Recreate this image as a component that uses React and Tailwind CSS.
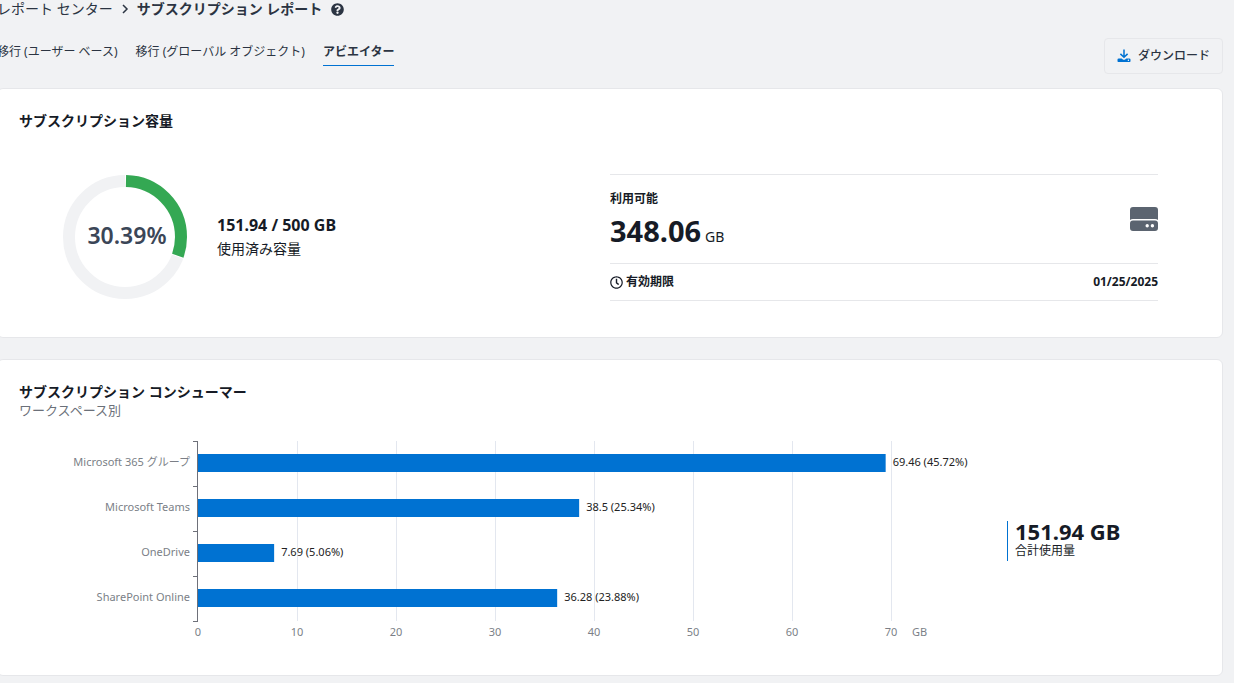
import { FaQuestionCircle, FaRegClock } from 'react-icons/fa';

const TABS = [
    { id: 'user', label: '移行 (ユーザー ベース)' },
    { id: 'global', label: '移行 (グローバル オブジェクト)' },
    { id: 'aviator', label: 'アビエイター' },
];

const CONSUMERS = [
    { name: 'Microsoft 365 グループ', value: 69.46, percent: 45.72 },
    { name: 'Microsoft Teams', value: 38.5, percent: 25.34 },
    { name: 'OneDrive', value: 7.69, percent: 5.06 },
    { name: 'SharePoint Online', value: 36.28, percent: 23.88 },
];

const TICKS = [0, 10, 20, 30, 40, 50, 60, 70];
const MAX = 70;
const ROW = 45;

const DownloadIcon = () => (
    <svg viewBox="0 0 14 14" className="w-[14px] h-[14px] text-[#0072d2]" fill="none" aria-hidden="true">
        <path d="M7 .5v7.5M3.4 4.9 7 8.3l3.6-3.4" stroke="currentColor" strokeWidth="1.5" />
        <path d="M1.8 9.4h2.9L6.2 10.7h1.6l1.5-1.3h2.9q1.3 0 1.3 1.2v1.3q0 1.2-1.3 1.2H1.8Q.5 13.1.5 11.9v-1.3q0-1.2 1.3-1.2z" fill="currentColor" />
        <circle cx="11.4" cy="11.3" r=".7" fill="#fff" />
    </svg>
);

const DriveIcon = () => (
    <svg viewBox="0 0 28 24" className="w-7 h-6 text-[#5b6470]" fill="currentColor" aria-hidden="true">
        <path d="M3 0h22q3 0 3 3v10q-1.2-.9-3-.9H3q-1.8 0-3 .9V3q0-3 3-3z" />
        <path fillRule="evenodd" d="M3 13.5h22q3 0 3 3V21q0 3-3 3H3q-3 0-3-3v-4.5q0-3 3-3zm14.2 3.6a1.7 1.7 0 1 0 0 3.4 1.7 1.7 0 0 0 0-3.4zm5.2 0a1.7 1.7 0 1 0 0 3.4 1.7 1.7 0 0 0 0-3.4z" />
    </svg>
);

const Donut = ({ percent }) => {
    const r = 56;
    const length = 2 * Math.PI * r;
    const used = (percent / 100) * length;
    return (
        <svg viewBox="0 0 124 124" className="w-[124px] h-[124px] shrink-0" role="img" aria-label={`${percent}%`}>
            <g transform="rotate(-90 62 62)" fill="none" strokeWidth="12">
                <circle cx="62" cy="62" r={r} stroke="#f1f2f4" />
                <circle cx="62" cy="62" r={r} stroke="#fff" strokeDasharray={`${used + 2} ${length}`} strokeDashoffset="1" />
                <circle cx="62" cy="62" r={r} stroke="#34a853" strokeDasharray={`${used - 1} ${length}`} strokeDashoffset="-1" />
            </g>
            <text x="64" y="69" textAnchor="middle" className="text-[23px] font-semibold fill-[#3b4657]">{percent}%</text>
        </svg>
    );
};

// Category names hang left of the plot, tick labels sit below it
const BarChart = () => {
    const height = CONSUMERS.length * ROW;
    const pos = (v) => `${(v / MAX) * 100}%`;
    return (
        <svg width="100%" height={height} className="block overflow-visible text-[11px]" role="img" aria-label="ワークスペース別">
            {TICKS.slice(1).map((t) => (
                <line key={t} x1={pos(t)} x2={pos(t)} y1="0" y2={height} stroke="#e3e7ef" shapeRendering="crispEdges" />
            ))}
            {CONSUMERS.map((c, i) => (
                <g key={c.name}>
                    <rect x="0" y={i * ROW + 13} width={pos(c.value)} height="18" fill="#0072d2" />
                    <text x="-8" y={i * ROW + 25} textAnchor="end" className="fill-[#7b7f87]">{c.name}</text>
                    <text x={pos(c.value)} dx="7" y={i * ROW + 25} className="fill-[#222]">{`${c.value} (${c.percent}%)`}</text>
                </g>
            ))}
            <g stroke="#6e7079" shapeRendering="crispEdges">
                <line x1="-1" x2="-1" y1="0" y2={height} />
                {[0, 1, 2, 3, 4].map((i) => (
                    <line key={i} x1="-5" x2="0" y1={i * ROW} y2={i * ROW} />
                ))}
            </g>
            {TICKS.map((t) => (
                <text key={t} x={pos(t)} y={height + 15} textAnchor="middle" className="fill-[#7b7f87]">{t}</text>
            ))}
            <text x="100%" dx="21" y={height + 15} className="fill-[#7b7f87]">GB</text>
        </svg>
    );
};

const Card = ({ title, subtitle, children }) => (
    <section className="bg-white border border-[#e6e7ea] rounded-md">
        <div className="px-[21px] pt-[22px]">
            <h2 className="text-sm leading-5 font-bold">{title}</h2>
            {subtitle && <p className="text-[13px] leading-4 text-[#6b7079]">{subtitle}</p>}
        </div>
        {children}
    </section>
);

const App = () => {
    return (
        <div className="min-h-screen overflow-hidden bg-[#f1f2f4] text-[#161b26] font-['Noto_Sans','Noto_Sans_CJK_JP',sans-serif]">
            <div className="-ml-[3px] mr-[11px]">
                <nav className="flex items-center h-[18px] text-sm leading-[18px] text-[#2b3442]">
                    <a href="#reports" className="shrink-0">レポート センター</a>
                    <svg viewBox="0 0 8 10" className="w-2 h-[10px] mx-2" fill="none" aria-hidden="true">
                        <path d="M2 1l4 4-4 4" stroke="currentColor" strokeWidth="1.5" />
                    </svg>
                    <h1 className="font-bold">サブスクリプション レポート</h1>
                    <FaQuestionCircle className="w-[13px] h-[13px] ml-[9px]" />
                </nav>

                <div className="flex items-start justify-between pt-5 pb-[14px]">
                    <div className="flex gap-[18px] pt-1 text-[12px] leading-5 text-[#2b3442]" role="tablist">
                        {TABS.map((tab) => (
                            <button
                                key={tab.id}
                                role="tab"
                                aria-selected={tab.id === 'aviator'}
                                className={`pb-[3px] border-b ${tab.id === 'aviator' ? 'font-bold border-[#0072d2]' : 'border-transparent'}`}
                            >
                                {tab.label}
                            </button>
                        ))}
                    </div>
                    <button className="flex items-center gap-[7px] h-9 px-3 text-[12px] font-medium text-[#2b3442] border border-[#e6e7ea] rounded">
                        <DownloadIcon />
                        ダウンロード
                    </button>
                </div>

                <main className="flex flex-col gap-[21px]">
                    <Card title="サブスクリプション容量">
                        <div className="grid grid-cols-2 items-center pt-[43px] pb-9">
                            <div className="flex items-center gap-[30px] pl-[65px] pb-[2px]">
                                <Donut percent={30.39} />
                                <div>
                                    <p className="text-base leading-6 font-bold">151.94 / 500 GB</p>
                                    <p className="text-sm leading-6">使用済み容量</p>
                                </div>
                            </div>
                            <div className="mr-16 border-y border-[#e6e7ea]">
                                <div className="flex items-center justify-between h-[88px]">
                                    <div>
                                        <p className="text-xs leading-6 font-bold">利用可能</p>
                                        <p className="flex items-baseline gap-1 leading-10">
                                            <span className="text-[29px] font-bold">348.06</span>
                                            <span className="text-sm">GB</span>
                                        </p>
                                    </div>
                                    <DriveIcon />
                                </div>
                                <div className="flex items-center justify-between h-[37px] border-t border-[#e6e7ea] text-xs font-bold">
                                    <span className="flex items-center gap-[3px]">
                                        <FaRegClock className="w-[13px] h-[13px]" />
                                        有効期限
                                    </span>
                                    <span>01/25/2025</span>
                                </div>
                            </div>
                        </div>
                    </Card>

                    <Card title="サブスクリプション コンシューマー" subtitle="ワークスペース別">
                        <div className="flex items-center pt-[23px] pb-[54px]">
                            <div className="flex-1 pl-[200px] pr-[116px]">
                                <BarChart />
                            </div>
                            <div className="w-[215px] mt-5">
                                <div className="pl-[7px] border-l border-[#0072d2]">
                                    <p className="text-[22px] leading-5 font-bold">151.94 GB</p>
                                    <p className="text-xs leading-5">合計使用量</p>
                                </div>
                            </div>
                        </div>
                    </Card>
                </main>
            </div>
        </div>
    );
};

export default App;
